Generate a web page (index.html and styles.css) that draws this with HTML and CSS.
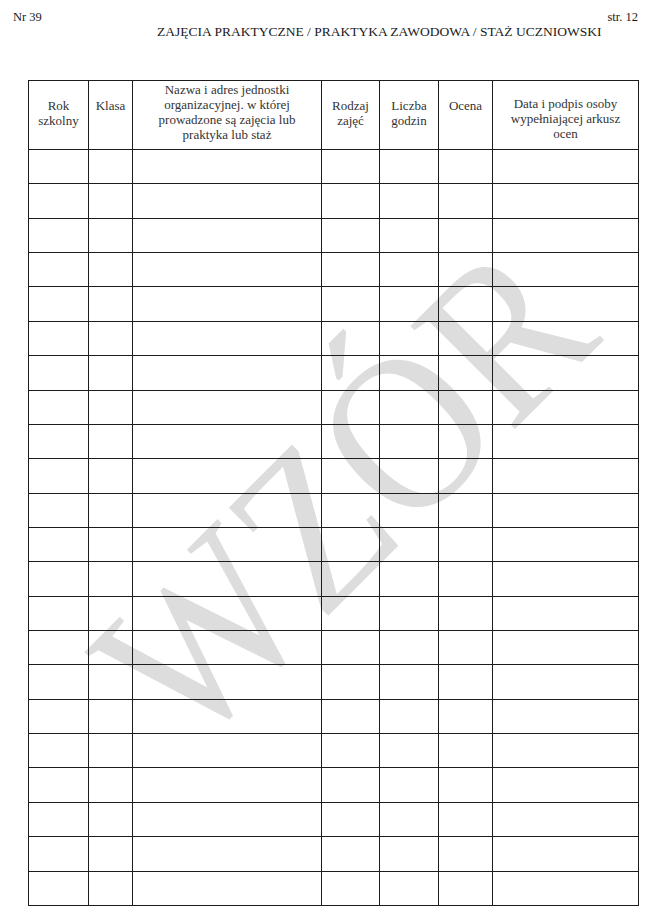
FILE: index.html
```html
<!DOCTYPE html>
<html lang="pl">
<head>
<meta charset="utf-8">
<title>Zajęcia praktyczne</title>
<link rel="stylesheet" href="styles.css">
</head>
<body>
<div class="page">
  <svg class="watermark" width="647" height="923" viewBox="0 0 647 923" aria-hidden="true">
    <text class="watermark-text" transform="translate(188 756) rotate(-45) scale(1 1.12)" x="0" y="0">WZÓR</text>
  </svg>
  <header class="top">
    <div class="meta"><span>Nr 39</span><span>str. 12</span></div>
    <h1 class="title">ZAJĘCIA PRAKTYCZNE / PRAKTYKA ZAWODOWA / STAŻ UCZNIOWSKI</h1>
  </header>
  <table class="sheet">
    <colgroup>
      <col class="c-rok"><col class="c-klasa"><col class="c-nazwa"><col class="c-rodzaj"><col class="c-liczba"><col class="c-ocena"><col class="c-data">
    </colgroup>
    <thead>
      <tr class="head">
        <th>Rok<br>szkolny</th>
        <th>Klasa</th>
        <th class="th-nazwa">Nazwa i adres jednostki<br>organizacyjnej. w której<br>prowadzone są zajęcia lub<br>praktyka lub staż</th>
        <th>Rodzaj<br>zajęć</th>
        <th>Liczba<br>godzin</th>
        <th>Ocena</th>
        <th class="th-data">Data i podpis osoby<br>wypełniającej arkusz<br>ocen</th>
      </tr>
    </thead>
    <tbody>
      <tr><td></td><td></td><td></td><td></td><td></td><td></td><td></td></tr>
      <tr><td></td><td></td><td></td><td></td><td></td><td></td><td></td></tr>
      <tr><td></td><td></td><td></td><td></td><td></td><td></td><td></td></tr>
      <tr><td></td><td></td><td></td><td></td><td></td><td></td><td></td></tr>
      <tr><td></td><td></td><td></td><td></td><td></td><td></td><td></td></tr>
      <tr><td></td><td></td><td></td><td></td><td></td><td></td><td></td></tr>
      <tr><td></td><td></td><td></td><td></td><td></td><td></td><td></td></tr>
      <tr><td></td><td></td><td></td><td></td><td></td><td></td><td></td></tr>
      <tr><td></td><td></td><td></td><td></td><td></td><td></td><td></td></tr>
      <tr><td></td><td></td><td></td><td></td><td></td><td></td><td></td></tr>
      <tr><td></td><td></td><td></td><td></td><td></td><td></td><td></td></tr>
      <tr><td></td><td></td><td></td><td></td><td></td><td></td><td></td></tr>
      <tr><td></td><td></td><td></td><td></td><td></td><td></td><td></td></tr>
      <tr><td></td><td></td><td></td><td></td><td></td><td></td><td></td></tr>
      <tr><td></td><td></td><td></td><td></td><td></td><td></td><td></td></tr>
      <tr><td></td><td></td><td></td><td></td><td></td><td></td><td></td></tr>
      <tr><td></td><td></td><td></td><td></td><td></td><td></td><td></td></tr>
      <tr><td></td><td></td><td></td><td></td><td></td><td></td><td></td></tr>
      <tr><td></td><td></td><td></td><td></td><td></td><td></td><td></td></tr>
      <tr><td></td><td></td><td></td><td></td><td></td><td></td><td></td></tr>
      <tr><td></td><td></td><td></td><td></td><td></td><td></td><td></td></tr>
      <tr><td></td><td></td><td></td><td></td><td></td><td></td><td></td></tr>
    </tbody>
  </table>
</div>
</body>
</html>
```

FILE: styles.css
```css
html, body {
  margin: 0;
  padding: 0;
  background: #ffffff;
}

body {
  font-family: "Liberation Serif", "Times New Roman", serif;
  color: #1a1a1a;
}

.page {
  position: relative;
  width: 647px;
  min-height: 923px;
  overflow: hidden;
}

.watermark {
  position: absolute;
  left: 0;
  top: 0;
  z-index: 0;
}

.watermark-text {
  font-family: "Liberation Serif", "Times New Roman", serif;
  font-size: 200px;
  fill: #dddddd;
}

.top {
  position: relative;
  z-index: 1;
  padding-top: 10px;
}

.meta {
  display: flex;
  justify-content: space-between;
  padding: 0 9px 0 13px;
  font-size: 12.5px;
  line-height: 14px;
}

.title {
  margin: 0;
  padding-left: 157px;
  font-family: "Liberation Serif", "Times New Roman", serif;
  font-size: 13.5px;
  font-weight: normal;
  line-height: 15px;
  white-space: nowrap;
}

.sheet {
  position: relative;
  z-index: 1;
  margin: 41px 0 0 28px;
  width: 611px;
  border-collapse: collapse;
  table-layout: fixed;
  border: 1.5px solid #6a6a6a;
  font-family: "Liberation Serif", "Times New Roman", serif;
}

.c-rok { width: 60px; }
.c-klasa { width: 44px; }
.c-nazwa { width: 189px; }
.c-rodzaj { width: 58px; }
.c-liczba { width: 59px; }
.c-ocena { width: 54px; }
.c-data { width: 146px; }

.sheet th,
.sheet td {
  border: 1px solid #1c1c1c;
  padding: 0;
}

.head th {
  height: 51px;
  vertical-align: top;
  padding-top: 17px;
  font-family: "Liberation Serif", "Times New Roman", serif;
  font-weight: normal;
  font-size: 13px;
  line-height: 15px;
  color: #333333;
  text-align: center;
}

.head th.th-nazwa {
  padding-top: 1px;
}

.head th.th-data {
  padding-top: 15px;
}

.sheet tbody td {
  height: 33.36px;
}
```
